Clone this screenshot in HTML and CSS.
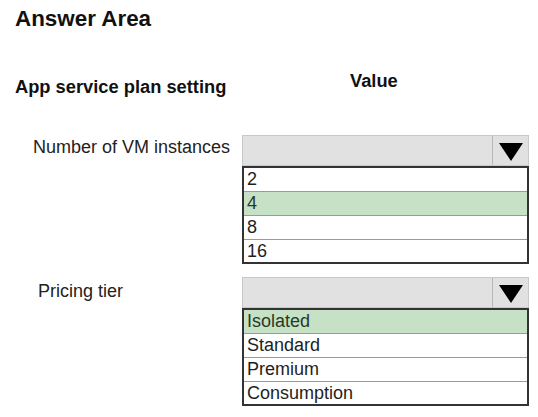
FILE: index.html
```html
<!DOCTYPE html>
<html lang="en">
<head>
<meta charset="utf-8">
<title>Answer Area</title>
<link rel="stylesheet" href="styles.css">
</head>
<body>
<div class="page">
  <h1 class="title">Answer Area</h1>
  <div class="heads">
    <div class="h-label">App service plan setting</div>
    <div class="h-value">Value</div>
  </div>

  <div class="setting setting-vm">
    <div class="label label-vm">Number of VM instances</div>
    <div class="dropdown">
      <div class="select">
        <div class="field"></div>
        <div class="btn">
          <svg width="24" height="18" viewBox="0 0 24 18"><polygon points="0,0 24,0 12,18" fill="#000"/></svg>
        </div>
      </div>
      <ul class="options">
        <li>2</li>
        <li class="sel">4</li>
        <li>8</li>
        <li>16</li>
      </ul>
    </div>
  </div>

  <div class="setting setting-tier">
    <div class="label label-tier">Pricing tier</div>
    <div class="dropdown">
      <div class="select">
        <div class="field"></div>
        <div class="btn">
          <svg width="24" height="18" viewBox="0 0 24 18"><polygon points="0,0 24,0 12,18" fill="#000"/></svg>
        </div>
      </div>
      <ul class="options">
        <li class="sel">Isolated</li>
        <li>Standard</li>
        <li>Premium</li>
        <li>Consumption</li>
      </ul>
    </div>
  </div>
</div>
</body>
</html>
```

FILE: styles.css
```css
html, body {
  margin: 0;
  padding: 0;
  background: #ffffff;
}

body {
  font-family: "Liberation Sans", Arial, sans-serif;
  color: #1e1e1e;
}

.page {
  width: 538px;
  height: 417px;
  overflow: hidden;
}

.title {
  margin: 6px 0 0 15px;
  font-size: 22.4px;
  line-height: 26px;
  font-weight: bold;
  color: #111;
}

.heads {
  display: grid;
  grid-template-columns: 242px 287px;
  margin-top: 39px;
  font-size: 18.3px;
  line-height: 20px;
  font-weight: bold;
  color: #111;
}

.h-label {
  padding: 6px 0 0 15px;
}

.h-value {
  padding-left: 108px;
}

.setting {
  display: grid;
  grid-template-columns: 242px 287px;
  align-items: start;
}

.setting-vm {
  margin-top: 38px;
}

.setting-tier {
  margin-top: 13px;
}

.label {
  font-size: 18px;
  line-height: 20px;
  color: #222;
}

.label-vm {
  padding: 2px 0 0 33px;
}

.label-tier {
  padding: 4px 0 0 38px;
}

.dropdown {
  display: flex;
  flex-direction: column;
}

.select {
  display: flex;
  height: 31px;
  box-sizing: border-box;
  border: 1px solid #c8c8c8;
  background: #e1e1e1;
}

.field {
  flex: 1;
}

.btn {
  width: 36px;
  border-left: 1px solid #b9b9b9;
  display: flex;
  justify-content: center;
  align-items: flex-start;
  padding-top: 7px;
  box-sizing: border-box;
}

.options {
  list-style: none;
  margin: 0;
  padding: 0;
  border: 2px solid #333;
  background: #fff;
}

.options li {
  height: 23px;
  line-height: 23px;
  font-size: 18px;
  padding-left: 3px;
  color: #1e1e1e;
}

.options li + li {
  border-top: 1px solid #9a9a9a;
}

.options li:last-child {
  height: 22px;
}

.options li.sel {
  background: #c6e1c5;
  color: #263a26;
}
```
